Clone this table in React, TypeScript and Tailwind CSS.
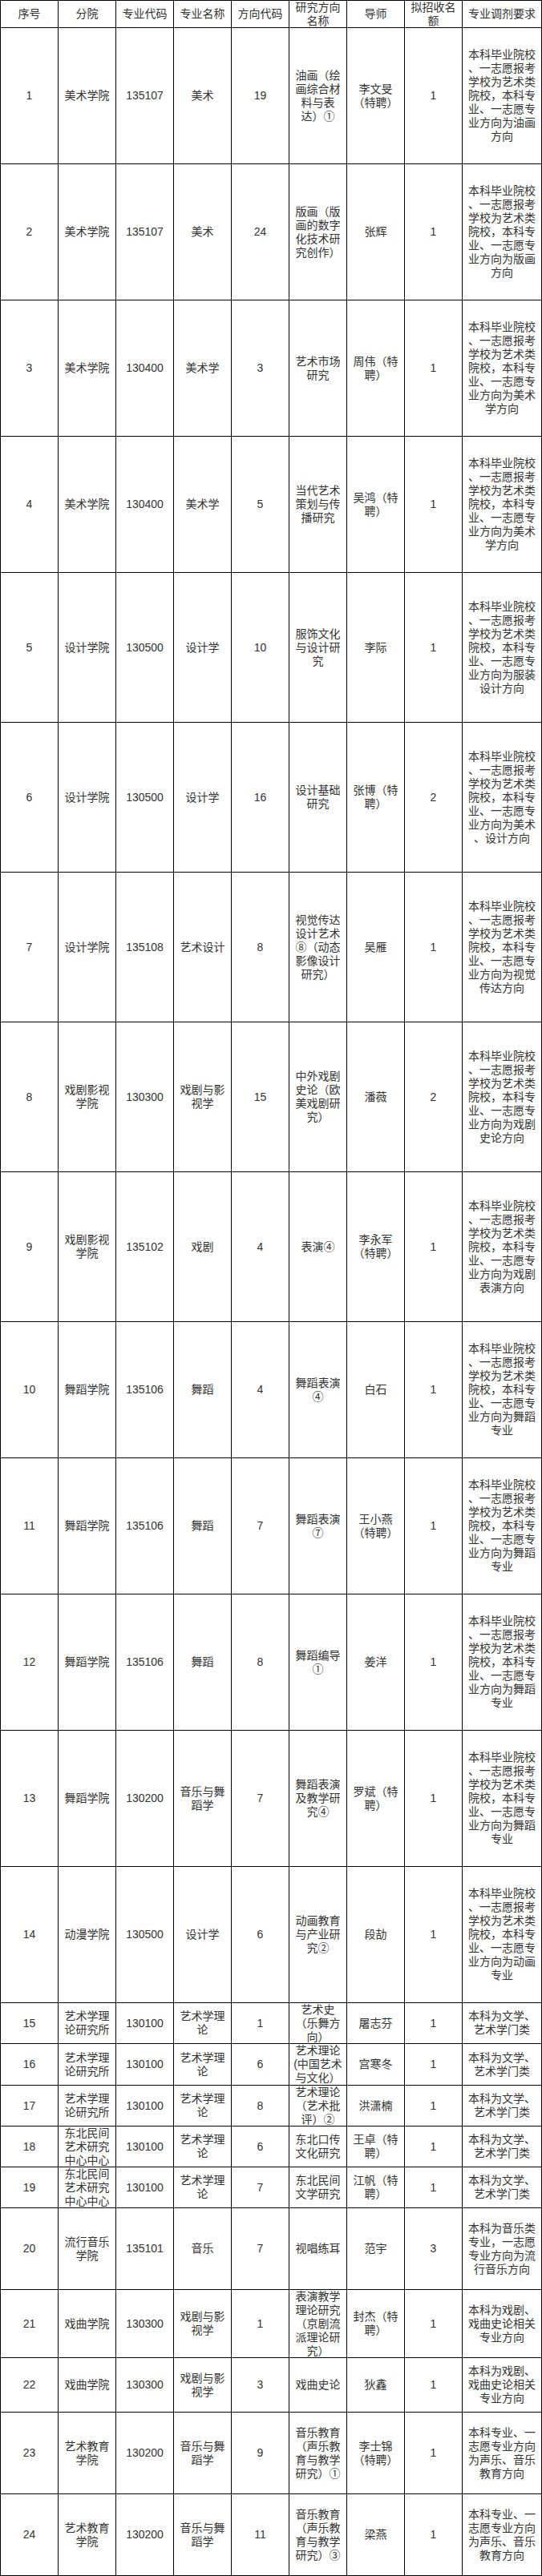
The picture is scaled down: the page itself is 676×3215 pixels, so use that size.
import React from 'react';

type Row = {
  h: string;
  cells: string[];
};

const REQ_A = (tail: string[]) => [
  '本科毕业院校',
  '、一志愿报考',
  '学校为艺术类',
  '院校，本科专',
  '业、一志愿专',
  ...tail,
];
const REQ_B = ['本科为文学、', '艺术学门类'];
const REQ_C = ['本科为戏剧、', '戏曲史论相关', '专业方向'];
const REQ_D = ['本科专业、一', '志愿专业方向', '为声乐、音乐', '教育方向'];

const header: string[] = [
  '序号',
  '分院',
  '专业代码',
  '专业名称',
  '方向代码',
  '研究方向/名称',
  '导师',
  '拟招收名/额',
  '专业调剂要求',
];

type RowData = { h: string; c: (string | string[])[] };

const rows: RowData[] = [
  { h: 'h-[170px]', c: ['1', '美术学院', '135107', '美术', '19', '油画（绘/画综合材/料与表/达）①', '李文旻/（特聘）', '1', REQ_A(['业方向为油画', '方向'])] },
  { h: 'h-[170px]', c: ['2', '美术学院', '135107', '美术', '24', '版画（版/画的数字/化技术研/究创作）', '张辉', '1', REQ_A(['业方向为版画', '方向'])] },
  { h: 'h-[170px]', c: ['3', '美术学院', '130400', '美术学', '3', '艺术市场/研究', '周伟（特/聘）', '1', REQ_A(['业方向为美术', '学方向'])] },
  { h: 'h-[170px]', c: ['4', '美术学院', '130400', '美术学', '5', '当代艺术/策划与传/播研究', '吴鸿（特/聘）', '1', REQ_A(['业方向为美术', '学方向'])] },
  { h: 'h-[187px]', c: ['5', '设计学院', '130500', '设计学', '10', '服饰文化/与设计研/究', '李际', '1', REQ_A(['业方向为服装', '设计方向'])] },
  { h: 'h-[187px]', c: ['6', '设计学院', '130500', '设计学', '16', '设计基础/研究', '张博（特/聘）', '2', REQ_A(['业方向为美术', '、设计方向'])] },
  { h: 'h-[187px]', c: ['7', '设计学院', '135108', '艺术设计', '8', '视觉传达/设计艺术/⑧（动态/影像设计/研究）', '吴雁', '1', REQ_A(['业方向为视觉', '传达方向'])] },
  { h: 'h-[187px]', c: ['8', '戏剧影视/学院', '130300', '戏剧与影/视学', '15', '中外戏剧/史论（欧/美戏剧研/究）', '潘薇', '2', REQ_A(['业方向为戏剧', '史论方向'])] },
  { h: 'h-[187px]', c: ['9', '戏剧影视/学院', '135102', '戏剧', '4', '表演④', '李永军/（特聘）', '1', REQ_A(['业方向为戏剧', '表演方向'])] },
  { h: 'h-[170px]', c: ['10', '舞蹈学院', '135106', '舞蹈', '4', '舞蹈表演/④', '白石', '1', REQ_A(['业方向为舞蹈', '专业'])] },
  { h: 'h-[170px]', c: ['11', '舞蹈学院', '135106', '舞蹈', '7', '舞蹈表演/⑦', '王小燕/（特聘）', '1', REQ_A(['业方向为舞蹈', '专业'])] },
  { h: 'h-[170px]', c: ['12', '舞蹈学院', '135106', '舞蹈', '8', '舞蹈编导/①', '姜洋', '1', REQ_A(['业方向为舞蹈', '专业'])] },
  { h: 'h-[170px]', c: ['13', '舞蹈学院', '130200', '音乐与舞/蹈学', '7', '舞蹈表演/及教学研/究④', '罗斌（特/聘）', '1', REQ_A(['业方向为舞蹈', '专业'])] },
  { h: 'h-[170px]', c: ['14', '动漫学院', '130500', '设计学', '6', '动画教育/与产业研/究②', '段劼', '1', REQ_A(['业方向为动画', '专业'])] },
  { h: 'h-[51px]', c: ['15', '艺术学理/论研究所', '130100', '艺术学理/论', '1', '艺术史/（乐舞方/向）', '屠志芬', '1', REQ_B] },
  { h: 'h-[52px]', c: ['16', '艺术学理/论研究所', '130100', '艺术学理/论', '6', '艺术理论/(中国艺术/与文化）', '宫寒冬', '1', REQ_B] },
  { h: 'h-[51px]', c: ['17', '艺术学理/论研究所', '130100', '艺术学理/论', '8', '艺术理论/（艺术批/评）②', '洪潇楠', '1', REQ_B] },
  { h: 'h-[51px]', c: ['18', '东北民间/艺术研究/中心中心', '130100', '艺术学理/论', '6', '东北口传/文化研究', '王卓（特/聘）', '1', REQ_B] },
  { h: 'h-[51px]', c: ['19', '东北民间/艺术研究/中心中心', '130100', '艺术学理/论', '7', '东北民间/文学研究', '江帆（特/聘）', '1', REQ_B] },
  { h: 'h-[102px]', c: ['20', '流行音乐/学院', '135101', '音乐', '7', '视唱练耳', '范宇', '3', ['本科为音乐类', '专业，一志愿', '专业方向为流', '行音乐方向']] },
  { h: 'h-[85px]', c: ['21', '戏曲学院', '130300', '戏剧与影/视学', '1', '表演教学/理论研究/（京剧流/派理论研/究）', '封杰（特/聘）', '1', REQ_C] },
  { h: 'h-[68px]', c: ['22', '戏曲学院', '130300', '戏剧与影/视学', '3', '戏曲史论', '狄鑫', '1', REQ_C] },
  { h: 'h-[102px]', c: ['23', '艺术教育/学院', '130200', '音乐与舞/蹈学', '9', '音乐教育/（声乐教/育与教学/研究）①', '李士锦/（特聘）', '1', REQ_D] },
  { h: 'h-[102px]', c: ['24', '艺术教育/学院', '130200', '音乐与舞/蹈学', '11', '音乐教育/（声乐教/育与教学/研究）③', '梁燕', '1', REQ_D] },
];

function Cell({ v }: { v: string | string[] }) {
  const lines = Array.isArray(v) ? v : v.split('/');
  return (
    <div className="flex items-center justify-center overflow-hidden border-r border-b border-black text-center">
      <div>
        {lines.map((l, i) => (
          <span key={i} className="block whitespace-nowrap">
            {l}
          </span>
        ))}
      </div>
    </div>
  );
}

const GRID = 'grid grid-cols-[72px_72px_72px_72px_72px_72px_72px_72px_99px]';

export default function App() {
  return (
    <div className="bg-white w-[676px]">
      <div
        className="w-[676px] border-l border-t border-black text-[14px] leading-[17px] text-[#333333]"
        style={{ fontFamily: '"Liberation Sans", "Noto Sans CJK SC", sans-serif' }}
      >
        <div className={`${GRID} h-[34px]`}>
          {header.map((h, i) => (
            <Cell key={i} v={h} />
          ))}
        </div>
        {rows.map((r, ri) => (
          <div key={ri} className={`${GRID} ${r.h}`}>
            {r.c.map((c, ci) => (
              <Cell key={ci} v={c} />
            ))}
          </div>
        ))}
      </div>
    </div>
  );
}
